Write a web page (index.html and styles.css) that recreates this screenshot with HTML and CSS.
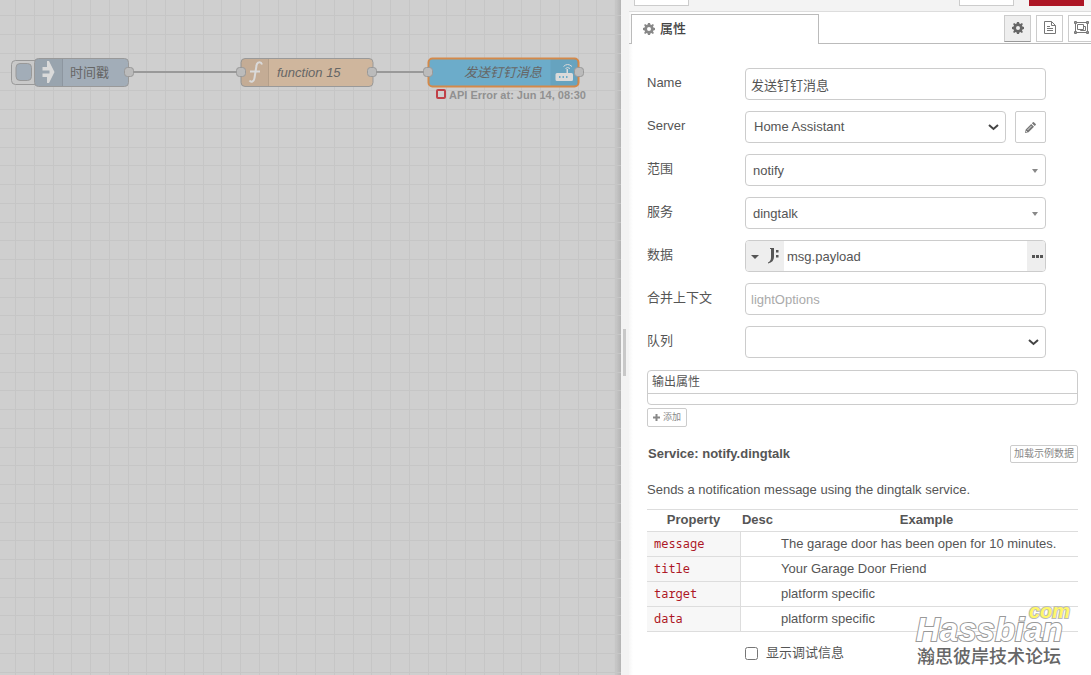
FILE: index.html
```html
<!DOCTYPE html>
<html lang="zh-CN">
<head>
<meta charset="utf-8">
<title>Node-RED</title>
<link rel="stylesheet" href="styles.css">
</head>
<body>
<div class="editor">
  <main class="workspace">
    <svg class="flow" width="100%" height="100%">
      <defs>
        <pattern id="grid" width="75" height="75" patternUnits="userSpaceOnUse">
          <path class="grid-line" d="M15.5 0V75M34.5 0V75M53.5 0V75M71.5 0V75M0 15.5H75M0 34.5H75M0 53.5H75M0 72.5H75"/>
        </pattern>
      </defs>
      <rect width="100%" height="100%" fill="url(#grid)"/>
      <path class="wire" d="M129 72H241M372 72H428"/>

      <g>
        <rect class="trigger" x="11.5" y="60.5" width="34" height="24" rx="4"/>
        <rect class="trigger-button" x="16" y="63.5" width="15.5" height="17" rx="4"/>
        <rect class="node inject" x="34.5" y="58.5" width="94" height="28" rx="4"/>
        <path class="icon-shade" d="M39 59h23.5v27H39a4 4 0 0 1-4-4V63a4 4 0 0 1 4-4z"/>
        <path class="divider" d="M62.5 59v27"/>
        <path class="node-icon" d="M47 61h2l5.5 11-5.5 11h-2v-6h-4.500v-3.500h7v-3h-7V67H47z"/>
        <text class="node-label" x="70" y="77">时间戳</text>
        <rect class="port" x="124.5" y="67.5" width="9" height="9" rx="3"/>
      </g>

      <g>
        <rect class="node function" x="241" y="58.5" width="132" height="28" rx="4"/>
        <path class="icon-shade" d="M245 59h23.5v27H245a4 4 0 0 1-4-4V63a4 4 0 0 1 4-4z"/>
        <path class="divider" d="M268.5 59v27"/>
        <path class="function-icon" d="M262 64.5c-1-3-5-3-5.500 1l-2 12.500c-.5 4-3.500 4.500-5 2.500M250 71.500h10"/>
        <text class="node-label italic" x="277" y="77">function 15</text>
        <rect class="port" x="236.5" y="67.5" width="9" height="9" rx="3"/>
        <rect class="port" x="367.5" y="67.5" width="9" height="9" rx="3"/>
      </g>

      <g>
        <rect class="node service" x="428.5" y="58.5" width="150" height="28" rx="4"/>
        <path class="icon-shade" d="M550.5 59.5H574a3 3 0 0 1 4 3v20a3 3 0 0 1-4 3h-23.500z"/>
        <text class="node-label italic" x="464" y="77">发送钉钉消息</text>
        <path class="node-icon" d="M557 73h9.500v-4h1.500v4h3.500q1.500 0 1.500 1.500v5q0 1.500-1.500 1.500H557q-1.500 0-1.500-1.500v-5q0-1.500 1.500-1.500z"/>
        <path class="router-lights" d="M559 77h1.500M562.500 77h1.500M566 77h1.500"/>
        <path class="router-waves" d="M563.500 66.500q4-4 8.500 0M565.500 68.500q2-2 4.500 0"/>
        <rect class="port" x="423.5" y="67.5" width="9" height="9" rx="3"/>
        <rect class="port" x="574.5" y="67.5" width="9" height="9" rx="3"/>
        <rect class="status-ring" x="437" y="90" width="8" height="8" rx="1"/>
        <text class="status" x="449" y="99">API Error at: Jun 14, 08:30</text>
      </g>
    </svg>
  </main>

  <div class="separator"><span class="grip"></span></div>

  <aside class="tray">
    <header class="toolbar">
      <button class="tool" type="button" aria-label="delete"></button>
      <span class="spacer"></span>
      <button class="tool" type="button" aria-label="cancel"></button>
      <button class="tool primary" type="button" aria-label="done"></button>
    </header>

    <nav class="tabs">
      <a class="tab" href="#properties">
        <svg class="gear" viewBox="0 0 12 12"><use href="#gear"/></svg>属性
      </a>
      <div class="tab-buttons">
        <button class="icon-button active" type="button" aria-label="properties">
          <svg class="gear" viewBox="0 0 12 12">
            <g id="gear"><path fill-rule="evenodd" d="M5 0h2l.4 1.600 1 .4L9.900 1.100l1 1L10 3.600l.4 1L12 5v2l-1.600.4-.4 1 .9 1.500-1 1L8.400 10l-1 .4L7 12H5l-.4-1.600-1-.4-1.500.9-1-1L2 8.400l-.4-1L0 7V5l1.600-.4.4-1-.9-1.500 1-1L3.600 2l1-.4zM6 4a2 2 0 1 0 0 4 2 2 0 0 0 0-4z"/></g>
          </svg>
        </button>
        <button class="icon-button" type="button" aria-label="description">
          <svg class="outline" width="12" height="13" viewBox="0 0 12 13"><path d="M.5.5h7l4 4v8H.5zM7.500.5v4h4M3 5.500h3M3 7.500h6M3 9.500h6"/></svg>
        </button>
        <button class="icon-button" type="button" aria-label="appearance">
          <svg class="outline" width="15" height="13" viewBox="0 0 15 13"><path d="M1.500 1.500h12v10h-12zM3.500 3.500h6v5h-6zM9.500 5.500h2v4h-5v-1M.5.5h2v2h-2zM12.500.5h2v2h-2zM.5 10.500h2v2h-2zM12.500 10.500h2v2h-2z"/></svg>
        </button>
      </div>
    </nav>

    <form class="form" id="properties">
      <div class="row">
        <label for="name">Name</label>
        <input class="field" id="name" type="text" value="发送钉钉消息">
      </div>
      <div class="row">
        <label for="server">Server</label>
        <div class="select">
          <select class="field inset" id="server"><option>Home Assistant</option></select>
          <svg class="chevron" viewBox="0 0 11 7"><path d="M1 1l4.500 4L10 1"/></svg>
        </div>
        <button class="edit" type="button" aria-label="edit server">
          <svg width="11" height="11" viewBox="0 0 11 11"><path d="M0 11l.7-3.500 5.500-5.500 2.800 2.800-5.500 5.500zM6.900 1.300l1-1q.5-.5 1 0l1.800 1.800q.5.5 0 1l-1 1z"/><path class="pencil-line" d="M2.500 8l4-4M1 9l1.200 1.200"/></svg>
        </button>
      </div>
      <div class="row">
        <label for="domain">范围</label>
        <div class="select">
          <select class="field" id="domain"><option>notify</option></select>
          <svg class="caret" viewBox="0 0 6 4"><path d="M0 0h6L3 4z"/></svg>
        </div>
      </div>
      <div class="row">
        <label for="service">服务</label>
        <div class="select">
          <select class="field" id="service"><option>dingtalk</option></select>
          <svg class="caret" viewBox="0 0 6 4"><path d="M0 0h6L3 4z"/></svg>
        </div>
      </div>
      <div class="row">
        <label for="data">数据</label>
        <div class="typed">
          <button class="type" type="button" aria-label="type">
            <svg width="28" height="16" viewBox="0 0 28 16"><path d="M0 7h8L4 11zM19 0h4v9q0 5-6 6.500v-1q3-1.500 3-5V1h-1zM25 2h2.500v2.500H25zM25 7h2.500v2.500H25z"/></svg>
          </button>
          <input class="typed-value" id="data" type="text" value="msg.payload">
          <button class="expand" type="button" aria-label="expand">
            <svg width="11" height="3" viewBox="0 0 11 3"><path d="M0 0h3v3H0zM4 0h3v3H4zM8 0h3v3H8z"/></svg>
          </button>
        </div>
      </div>
      <div class="row">
        <label for="context">合并上下文</label>
        <input class="field" id="context" type="text" placeholder="lightOptions">
      </div>
      <div class="row">
        <label for="queue">队列</label>
        <div class="select">
          <select class="field" id="queue"><option></option></select>
          <svg class="chevron" viewBox="0 0 11 7"><path d="M1 1l4.500 4L10 1"/></svg>
        </div>
      </div>

      <section class="outputs">
        <div class="outputs-title">输出属性</div>
        <div class="outputs-body"></div>
      </section>
      <button class="small add" type="button">
        <svg width="7" height="7" viewBox="0 0 7 7"><path d="M2.500 0h2v2.500H7v2H4.500V7h-2V4.500H0v-2h2.500z"/></svg>添加
      </button>

      <div class="service-head">
        <h2>Service: notify.dingtalk</h2>
        <button class="small" type="button">加载示例数据</button>
      </div>
      <p class="about">Sends a notification message using the dingtalk service.</p>

      <table class="params">
        <thead><tr><th class="property">Property</th><th class="desc">Desc</th><th>Example</th></tr></thead>
        <tbody>
          <tr><td class="code">message</td><td></td><td class="example">The garage door has been open for 10 minutes.</td></tr>
          <tr><td class="code">title</td><td></td><td class="example">Your Garage Door Friend</td></tr>
          <tr><td class="code">target</td><td></td><td class="example">platform specific</td></tr>
          <tr><td class="code">data</td><td></td><td class="example">platform specific</td></tr>
        </tbody>
      </table>

      <div class="debug">
        <input id="debug" type="checkbox">
        <label for="debug">显示调试信息</label>
      </div>
    </form>
  </aside>

  <svg class="watermark" width="160" height="70" viewBox="0 0 160 70">
    <text class="brand" x="2" y="41">Hassbian</text>
    <text class="com" x="115" y="18">com</text>
    <text class="forum" x="3" y="63">瀚思彼岸技术论坛</text>
  </svg>
</div>
</body>
</html>
```
FILE: styles.css
```css
* { box-sizing: border-box; }

body {
  margin: 0;
  font: 13px/20px "Liberation Sans", "Noto Sans CJK SC", sans-serif;
  color: #555;
  background: #fff;
}

button, input, select {
  margin: 0;
  font: inherit;
  color: inherit;
}

button {
  display: flex;
  align-items: center;
  justify-content: center;
  padding: 0;
  background: #fff;
  border: 1px solid #ccc;
}

svg { fill: currentColor; flex: none; }

.editor {
  position: relative;
  display: flex;
  height: 100vh;
  overflow: hidden;
}

/* Workspace */
.workspace {
  flex: 1;
  min-width: 0;
  background: linear-gradient(to left, #b4b4b4, #cfcfcf 7px);
}
.flow { display: block; }
.grid-line { stroke: #c6c6c6; fill: none; }
.wire { stroke: #999; stroke-width: 2; fill: none; }
.node { stroke: #999; stroke-width: 1; }
.inject { fill: #a2adb8; }
.function { fill: #cfb69d; }
.service { fill: #6cacca; stroke: #d4894a; stroke-width: 2; }
.trigger { fill: #c9c9c9; stroke: #999; }
.trigger-button { fill: #a2adb8; stroke: #999; }
.icon-shade { fill: #000; fill-opacity: .05; }
.divider { stroke: #000; stroke-opacity: .1; }
.node-icon { fill: #dadada; }
.function-icon { fill: none; stroke: #dadada; stroke-width: 2; }
.router-lights { stroke: #6cacca; stroke-width: 2; }
.router-waves { stroke: #dadada; fill: none; }
.node-label { font-size: 13px; fill: #666; }
.italic { font-style: italic; }
.port { fill: #bbb; stroke: #999; }
.status-ring { fill: #cfcfcf; stroke: #c04047; stroke-width: 2; }
.status { font-size: 11px; font-weight: bold; fill: #919191; }

.separator {
  display: flex;
  align-items: center;
  width: 8px;
  padding: 29px 2px 0;
  background: #f3f3f3;
}
.grip { width: 3px; height: 47px; background: #c8c8c8; }

/* Tray */
.tray {
  width: 462px;
  overflow: hidden;
  background: linear-gradient(to right, #f6f6f6, #fff 4px);
}
.toolbar {
  display: flex;
  align-items: flex-end;
  gap: 15px;
  height: 12px;
  padding: 0 7px 5px 5px;
  background: #f3f3f3;
  border-bottom: 1px solid #ddd;
}
.spacer { flex: 1; }
.tool { width: 55px; height: 28px; }
.primary { background: #ad1625; border-color: #ad1625; }

.tabs {
  display: flex;
  align-items: flex-end;
  height: 32px;
  padding-left: 2px;
  box-shadow: inset 0 -1px #bbb;
}
.tab {
  display: flex;
  align-items: center;
  gap: 5px;
  width: 188px;
  height: 30px;
  padding: 0 0 2px 11px;
  color: #444;
  font-weight: 500;
  text-decoration: none;
  background: #fff;
  border: 1px solid #bbb;
  border-bottom: 0;
}
.gear { width: 12px; height: 12px; }
.tab .gear { color: #888; }
.tab-buttons {
  display: flex;
  gap: 5px;
  margin: 0 -4px 2px auto;
}
.icon-button { width: 27px; height: 27px; padding-bottom: 2px; color: #777; }
.active { color: #666; background: #eee; border-bottom-color: #999; }
.outline { fill: none; stroke: #777; }

/* Form */
.form { padding: 24px 13px 0 18px; }
.row {
  display: flex;
  align-items: center;
  height: 32px;
  margin: 0 32px 11px 0;
}
.row > label { width: 98px; padding-bottom: 2px; }
.field {
  flex: 1;
  width: 100%;
  min-width: 0;
  height: 32px;
  padding: 0 5px;
  background: #fff;
  border: 1px solid #ccc;
  border-radius: 4px;
  appearance: none;
}
::placeholder { color: #aaa; opacity: 1; }
.select { position: relative; flex: 1; }
.select .field { display: block; padding: 1px 7px 0; }
.select .inset { padding: 0 8px; }
.chevron {
  position: absolute;
  top: 13px;
  right: 7px;
  width: 11px;
  height: 7px;
  fill: none;
  stroke: #444;
  stroke-width: 2;
  pointer-events: none;
}
.caret {
  position: absolute;
  top: 15px;
  right: 8px;
  width: 6px;
  height: 4px;
  fill: #888;
  pointer-events: none;
}
.edit {
  width: 31px;
  height: 32px;
  margin-left: 9px;
  color: #777;
  border-radius: 2px;
}
.pencil-line { fill: none; stroke: #ddd; }
.typed {
  display: flex;
  flex: 1;
  height: 32px;
  overflow: hidden;
  border: 1px solid #ccc;
  border-radius: 4px;
}
.typed button { background: #eee; border: 0; }
.type { width: 38px; }
.expand { width: 18px; padding-left: 2px; }
.typed-value { flex: 1; min-width: 0; padding: 2px 3px 0; border: 0; }

.outputs {
  height: 35px;
  margin-top: 12px;
  background: #fff;
  border: 1px solid #ccc;
  border-radius: 4px;
}
.outputs-title {
  height: 23px;
  padding-left: 4px;
  font-size: 12px;
  line-height: 22px;
  border-bottom: 1px solid #ccc;
}
.small {
  height: 18px;
  padding: 0 4px;
  font-size: 10px;
  line-height: 16px;
  color: #888;
  border-radius: 2px;
}
.small.add { gap: 3px; height: 19px; margin-top: 3px; padding: 0 5px 1px; font-size: 9px; }
.service-head {
  display: flex;
  align-items: center;
  justify-content: space-between;
  margin-top: 17px;
}
.service-head .small { padding: 0 3px; }
h2 { margin: 0 0 0 1px; font-size: 13px; line-height: 20px; }
.about { margin: 16px 0 9px; }

.params {
  width: 100%;
  table-layout: fixed;
  border-collapse: collapse;
  border-top: 1px solid #ddd;
}
.params th, .params td { padding: 0; border-bottom: 1px solid #ddd; }
.params th { height: 22px; padding-bottom: 1px; }
.params td { height: 25px; padding-bottom: 1px; }
.property { width: 93px; }
.desc { width: 35px; }
.params .code {
  padding-left: 7px;
  font-family: "Noto Sans Mono", "DejaVu Sans Mono", monospace;
  font-size: 12px;
  color: #ad1625;
  background: #f7f7f7;
  border-right: 1px solid #ddd;
}
.params .example { padding-left: 6px; }

.debug {
  display: flex;
  align-items: center;
  gap: 8px;
  margin: 11px 0 0 98px;
}
.debug input { width: 13px; height: 13px; }

/* Forum mark over the lower right corner */
.watermark { position: absolute; right: 17px; bottom: 5px; pointer-events: none; }
.brand, .com {
  font-weight: bold;
  font-style: italic;
  stroke-width: 2;
  paint-order: stroke;
}
.brand { font-size: 33px; fill: #fff; stroke: #999; }
.com { font-size: 20px; fill: #fff76a; stroke: #bbb; }
.forum { font-size: 18px; font-weight: 500; fill: #666; }
```
